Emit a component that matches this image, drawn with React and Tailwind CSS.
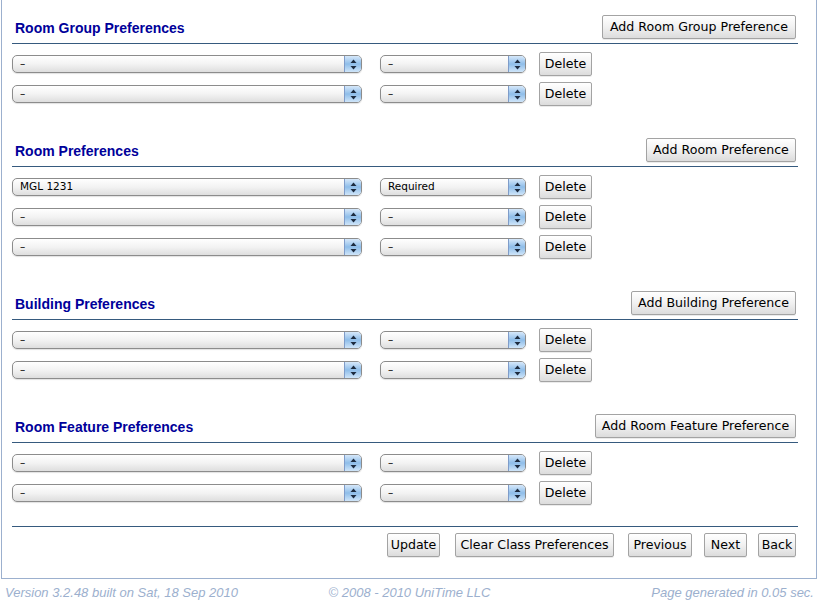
import React from "react";

const btnFont = { fontFamily: '"DejaVu Sans", "Liberation Sans", sans-serif' };

function Btn({ children, w }) {
  return (
    <div
      className="flex h-[24px] items-center justify-center rounded-[2px] border border-[#a3a3a3] bg-linear-to-b from-[#ffffff] via-[#f1f1f1] to-[#dcdcdc] pt-[1px] text-[12.6px] text-black shadow-[0_1px_0_rgba(0,0,0,0.08)]"
      style={{ ...btnFont, width: w }}
    >
      {children}
    </div>
  );
}

function Arrows() {
  return (
    <svg width="7" height="11" viewBox="0 0 7 11">
      <polygon points="3.5,0.5 6.5,4 0.5,4" fill="#1d2b3f" />
      <polygon points="3.5,10.5 6.5,7 0.5,7" fill="#1d2b3f" />
    </svg>
  );
}

function Select({ w, text }) {
  return (
    <div
      className="flex h-[18px] items-stretch overflow-hidden rounded-[5px] border border-[#8c8c8c] bg-linear-to-b from-[#ffffff] via-[#f3f3f3] to-[#dedede] shadow-[0_1px_1px_rgba(0,0,0,0.12)]"
      style={{ width: w }}
    >
      <span
        className="flex flex-1 items-center pl-[7px] text-[10.5px] text-black"
        style={btnFont}
      >
        {text}
      </span>
      <div className="flex w-[17px] items-center justify-center border-l border-[#7f9cc9] bg-linear-to-b from-[#d6e8fa] via-[#8ebde9] to-[#cfe5f9]">
        <Arrows />
      </div>
    </div>
  );
}

function Row({ a = "–", b = "–" }) {
  return (
    <div className="flex h-[30px] items-center">
      <Select w={350} text={a} />
      <div className="ml-[18px]">
        <Select w={146} text={b} />
      </div>
      <div className="ml-[13px]">
        <Btn w={53}>Delete</Btn>
      </div>
    </div>
  );
}

function Section({ title, button, bw, rows, first }) {
  return (
    <div className={first ? "pt-[15px]" : "pt-[29px]"}>
      <div className="flex h-[24px] items-center justify-between">
        <div
          className="pl-[3px] pt-[2px] text-[14px] font-bold text-[#00009a]"
          style={{ fontFamily: '"Liberation Sans", Arial, sans-serif' }}
        >
          {title}
        </div>
        <div className="mr-[2px]">
          <Btn w={bw}>{button}</Btn>
        </div>
      </div>
      <div className="mt-[4px] h-[1px] bg-[#365a7e]" />
      <div className="mt-[5px]">
        {rows.map((r, i) => (
          <Row key={i} a={r[0]} b={r[1]} />
        ))}
      </div>
    </div>
  );
}

export default function App() {
  return (
    <div className="h-[605px] w-[818px] overflow-hidden bg-white">
      <div className="ml-[1px] h-[579px] w-[816px] border-x border-b border-[#9cb0ce] pl-[10px] pr-[18px]">
        <Section
          first
          title="Room Group Preferences"
          button="Add Room Group Preference"
          bw={194}
          rows={[["–", "–"], ["–", "–"]]}
        />
        <Section
          title="Room Preferences"
          button="Add Room Preference"
          bw={150}
          rows={[["MGL 1231", "Required"], ["–", "–"], ["–", "–"]]}
        />
        <Section
          title="Building Preferences"
          button="Add Building Preference"
          bw={165}
          rows={[["–", "–"], ["–", "–"]]}
        />
        <Section
          title="Room Feature Preferences"
          button="Add Room Feature Preference"
          bw={201}
          rows={[["–", "–"], ["–", "–"]]}
        />
        <div className="mt-[18px] h-[1px] bg-[#365a7e]" />
        <div className="mt-[6px] flex justify-end pr-[2px]">
          <Btn w={53}>Update</Btn>
          <div className="ml-[15px]">
            <Btn w={159}>Clear Class Preferences</Btn>
          </div>
          <div className="ml-[14px]">
            <Btn w={64}>Previous</Btn>
          </div>
          <div className="ml-[12px]">
            <Btn w={43}>Next</Btn>
          </div>
          <div className="ml-[11px]">
            <Btn w={38}>Back</Btn>
          </div>
        </div>
      </div>
      <div
        className="grid grid-cols-3 pl-[5px] pr-[4px] pt-[6px] text-[13px] italic leading-[16px] text-[#9cb0ce]"
        style={{ fontFamily: '"Liberation Sans", Arial, sans-serif' }}
      >
        <div className="whitespace-nowrap">Version 3.2.48 built on Sat, 18 Sep 2010</div>
        <div className="whitespace-nowrap text-center">© 2008 - 2010 UniTime LLC</div>
        <div className="whitespace-nowrap text-right">Page generated in 0.05 sec.</div>
      </div>
    </div>
  );
}
